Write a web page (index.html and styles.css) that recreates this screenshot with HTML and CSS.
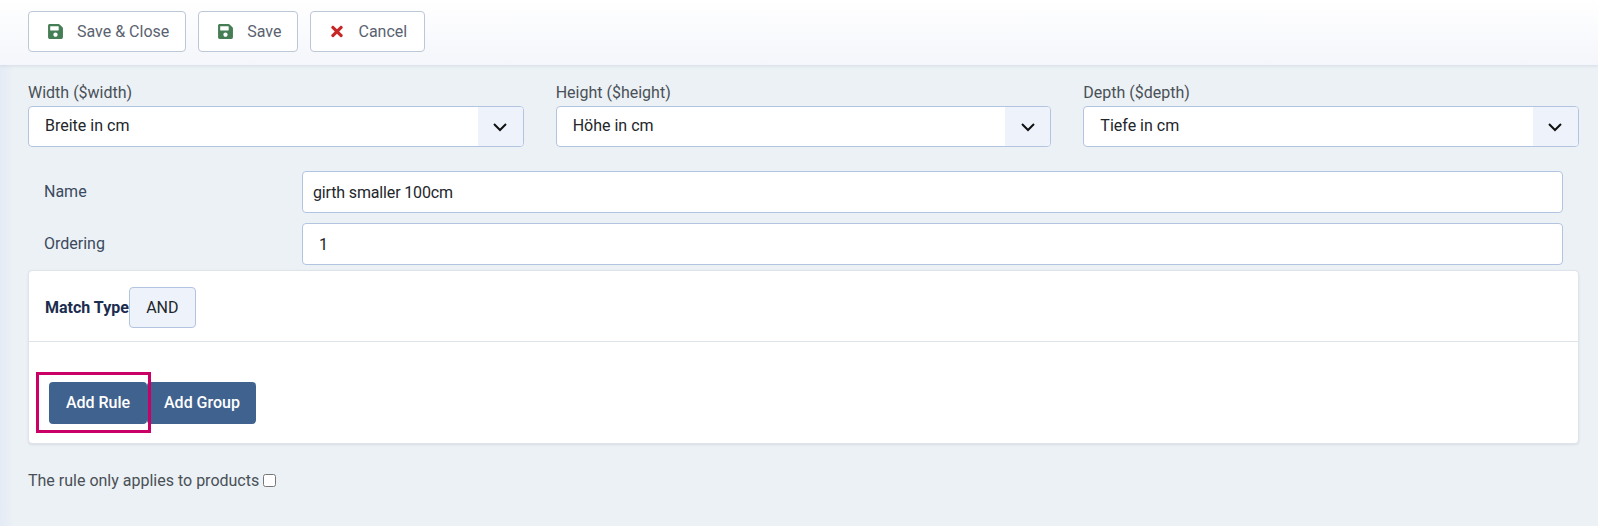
FILE: index.html
```html
<!DOCTYPE html>
<html lang="en">
<head>
<meta charset="utf-8">
<title>Rule</title>
<link rel="stylesheet" href="styles.css">
</head>
<body>
<header class="toolbar">
  <button class="tool-btn tool-btn-wide" type="button"><span class="tool-icon"><svg class="icon-save" viewBox="0 0 448 512"><path d="M433.941 129.941l-83.882-83.882A48 48 0 0 0 316.118 32H48C21.49 32 0 53.49 0 80v352c0 26.51 21.49 48 48 48h352c26.51 0 48-21.49 48-48V163.882a48 48 0 0 0-14.059-33.941zM224 416c-35.346 0-64-28.654-64-64 0-35.346 28.654-64 64-64s64 28.654 64 64c0 35.346-28.654 64-64 64zm96-304.52V212c0 6.627-5.373 12-12 12H76c-6.627 0-12-5.373-12-12V108c0-6.627 5.373-12 12-12h228.52c3.183 0 6.235 1.264 8.485 3.515l3.48 3.48A11.996 11.996 0 0 1 320 111.48z"/></svg></span>Save &amp; Close</button>
  <button class="tool-btn" type="button"><span class="tool-icon"><svg class="icon-save" viewBox="0 0 448 512"><path d="M433.941 129.941l-83.882-83.882A48 48 0 0 0 316.118 32H48C21.49 32 0 53.49 0 80v352c0 26.51 21.49 48 48 48h352c26.51 0 48-21.49 48-48V163.882a48 48 0 0 0-14.059-33.941zM224 416c-35.346 0-64-28.654-64-64 0-35.346 28.654-64 64-64s64 28.654 64 64c0 35.346-28.654 64-64 64zm96-304.52V212c0 6.627-5.373 12-12 12H76c-6.627 0-12-5.373-12-12V108c0-6.627 5.373-12 12-12h228.52c3.183 0 6.235 1.264 8.485 3.515l3.48 3.48A11.996 11.996 0 0 1 320 111.48z"/></svg></span>Save</button>
  <button class="tool-btn tool-btn-cancel" type="button"><span class="tool-icon"><svg class="icon-cancel" viewBox="0 0 352 512"><path d="M242.72 256l100.07-100.07c12.28-12.28 12.28-32.19 0-44.48l-22.24-22.24c-12.28-12.28-32.19-12.28-44.48 0L176 189.28 75.93 89.21c-12.28-12.28-32.19-12.28-44.48 0L9.21 111.45c-12.28 12.28-12.28 32.19 0 44.48L109.28 256 9.21 356.07c-12.28 12.28-12.28 32.19 0 44.48l22.24 22.24c12.28 12.28 32.2 12.28 44.48 0L176 322.72l100.07 100.07c12.28 12.28 32.2 12.28 44.48 0l22.24-22.24c12.28-12.28 12.28-32.19 0-44.48L242.72 256z"/></svg></span>Cancel</button>
</header>
<main class="content">
  <section class="dims">
    <div class="dim">
      <label class="dim-label">Width ($width)</label>
      <div class="select-group">
        <span class="select-value">Breite in cm</span>
        <span class="select-caret"><svg viewBox="0 0 16 16"><path d="M2 5l6 6 6-6"/></svg></span>
      </div>
    </div>
    <div class="dim">
      <label class="dim-label">Height ($height)</label>
      <div class="select-group">
        <span class="select-value">Höhe in cm</span>
        <span class="select-caret"><svg viewBox="0 0 16 16"><path d="M2 5l6 6 6-6"/></svg></span>
      </div>
    </div>
    <div class="dim">
      <label class="dim-label">Depth ($depth)</label>
      <div class="select-group">
        <span class="select-value">Tiefe in cm</span>
        <span class="select-caret"><svg viewBox="0 0 16 16"><path d="M2 5l6 6 6-6"/></svg></span>
      </div>
    </div>
  </section>
  <section class="fields">
    <div class="field">
      <label class="field-label">Name</label>
      <input class="field-input field-name" type="text" value="girth smaller 100cm">
    </div>
    <div class="field">
      <label class="field-label">Ordering</label>
      <input class="field-input field-number" type="text" value="1">
    </div>
  </section>
  <section class="card">
    <div class="card-head">
      <strong class="match-label">Match Type</strong>
      <span class="match-btn">AND</span>
    </div>
    <div class="card-body">
      <div class="action-row">
        <button class="primary-btn highlighted" type="button">Add Rule</button>
        <button class="primary-btn" type="button">Add Group</button>
      </div>
    </div>
  </section>
  <p class="apply-row">The rule only applies to products&nbsp;<input class="apply-check" type="checkbox"></p>
</main>
</body>
</html>
```
FILE: styles.css
```css
* { box-sizing: border-box; }
html, body { height: 100%; }
body {
  margin: 0;
  overflow: hidden;
  font-family: Roboto, "Liberation Sans", sans-serif;
  font-size: 16px;
  color: #495057;
  background: linear-gradient(90deg, #e5ebf5 0, #ecf1f5 14px);
}
.toolbar {
  display: flex;
  gap: 12px;
  height: 65px;
  padding: 11px 0 0 28px;
  background: linear-gradient(180deg, #fff 0, #f4f6fb 100%);
  box-shadow: 0 1px 3px rgba(120, 140, 170, .2);
}
.tool-btn {
  display: flex;
  align-items: center;
  height: 41px;
  padding: 0 15px 0 19px;
  border: 1px solid #bcc7d8;
  border-radius: 4px;
  background: #fff;
  color: #5a6270;
  font: inherit;
}
.tool-btn-wide { padding-right: 16px; }
.tool-btn-cancel { padding-right: 17px; }
.tool-icon {
  display: flex;
  justify-content: center;
  width: 15px;
  margin-right: 14px;
}
.tool-icon svg { height: 17px; display: block; }
.icon-save { fill: #457d54; width: 15px; }
.icon-cancel { fill: #c52827; width: 12px; }
.content { padding: 0 19px 0 28px; }
.dims {
  display: grid;
  grid-template-columns: repeat(3, 1fr);
  gap: 32px;
  padding-top: 16px;
}
.dim-label {
  display: block;
  line-height: 24px;
  height: 25px;
}
.select-group {
  display: flex;
  height: 41px;
  border: 1px solid #b2c4e0;
  border-radius: 4px;
  background: #fff;
  overflow: hidden;
}
.select-value {
  flex: 1;
  padding-left: 16px;
  line-height: 38px;
  color: #22262a;
}
.select-caret {
  display: flex;
  align-items: center;
  justify-content: center;
  width: 45px;
  background: #eef3fb;
}
.select-caret svg {
  width: 16px;
  height: 16px;
  fill: none;
  stroke: #111;
  stroke-width: 2;
}
.fields { padding: 24px 16px 0 16px; }
.field {
  display: flex;
  align-items: center;
  margin-bottom: 10px;
}
.field:last-child { margin-bottom: 0; }
.field-label {
  width: 258px;
  padding-bottom: 2px;
  color: #3b4a5e;
}
.field-input {
  flex: 1;
  height: 42px;
  padding: 0 10px;
  border: 1px solid #b2c4e0;
  border-radius: 4px;
  background: #fff;
  color: #22262a;
  font: inherit;
}
.field-name { letter-spacing: -0.15px; }
.field-number { padding-left: 16px; }
.card {
  margin-top: 5px;
  border: 1px solid #dfe3ea;
  border-radius: 4px;
  background: #fff;
  box-shadow: 0 1px 2px rgba(100, 115, 140, .15);
}
.card-head {
  display: flex;
  align-items: center;
  padding: 16px 16px 13px;
  border-bottom: 1px solid #dfe3ea;
}
.match-label { color: #1c2d4f; font-weight: 700; }
.match-btn {
  display: flex;
  align-items: center;
  justify-content: center;
  width: 67px;
  height: 41px;
  border: 1px solid #b2c4e0;
  border-radius: 4px;
  background: #eef3fb;
  color: #22262a;
}
.card-body { padding: 40px 20px 19px; }
.action-row { display: flex; }
.primary-btn {
  height: 42px;
  padding: 0 16px 2px 17px;
  border: 0;
  border-radius: 4px;
  background: #3f628e;
  color: #fff;
  font: inherit;
  font-weight: 500;
}
.highlighted {
  position: relative;
  width: 98px;
  padding: 0 0 2px;
}
.highlighted::after {
  content: "";
  position: absolute;
  top: -10px;
  left: -13px;
  right: -4px;
  bottom: -9px;
  border: 3px solid #cb0066;
  pointer-events: none;
}
.apply-row {
  display: flex;
  align-items: center;
  margin: 25px 0 0;
  line-height: 24px;
}
.apply-check {
  width: 13px;
  height: 13px;
  margin: -2px 0 0;
}
```
